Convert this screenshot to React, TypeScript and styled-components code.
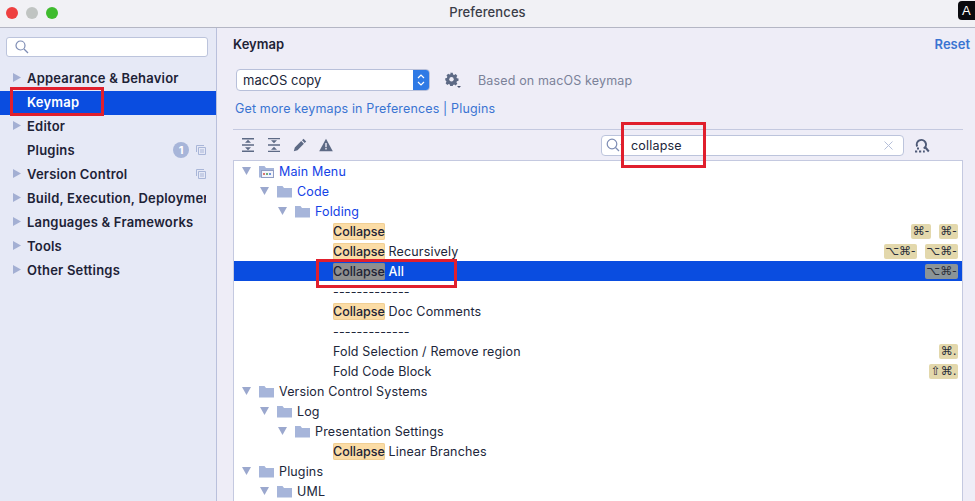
import * as React from 'react';
import styled, { createGlobalStyle } from 'styled-components';

const GlobalStyle = createGlobalStyle`
  html, body {
    margin: 0;
    padding: 0;
    height: 100%;
    overflow: hidden;
    background: #eeedf7;
    font-family: Inter, "Noto Sans", "Liberation Sans", sans-serif;
  }
`;

const Arrow: React.FC<{ open?: boolean }> = ({ open }) => (
  <svg width="10" height="10" viewBox="0 0 10 10">
    {open ? <path d="M0 1h9L4.500 9z" fill="#9ba8ce" /> : <path d="M1 0l8 4.500L1 9z" fill="#a3afd3" />}
  </svg>
);

const Folder: React.FC<{ menu?: boolean }> = ({ menu }) => (
  <svg width="15" height="13" viewBox="0 0 15 13">
    <path d="M0 1h5.500l1.500 2h8v9.500H0z" fill="#a6b5da" />
    {menu && (
      <>
        <rect x="2.500" y="5.500" width="12" height="7" fill="#f3f4fa" stroke="#8f9dc4" />
        <rect x="4" y="8" width="2" height="2" fill="#d9776f" />
        <rect x="7" y="8" width="2" height="2" fill="#6fae7b" />
        <rect x="10" y="8" width="2" height="2" fill="#6f94d9" />
      </>
    )}
  </svg>
);

const CopyIcon = () => (
  <svg width="10" height="10" viewBox="0 0 10 10" fill="none" stroke="#a9b6d8">
    <path d="M.5 7V.5H8M2.500 2.500h7v7h-7zM4 5h4M4 7h4" />
  </svg>
);

const navItems = [
  { label: 'Appearance & Behavior', arrow: true },
  { label: 'Keymap', selected: true },
  { label: 'Editor', arrow: true },
  { label: 'Plugins', badge: true, copy: true },
  { label: 'Version Control', arrow: true, copy: true },
  { label: 'Build, Execution, Deployment', arrow: true },
  { label: 'Languages & Frameworks', arrow: true },
  { label: 'Tools', arrow: true },
  { label: 'Other Settings', arrow: true },
];

type TreeRow = {
  depth: number;
  folder?: boolean;
  menu?: boolean;
  link?: boolean;
  hit?: boolean;
  text?: string;
  selected?: boolean;
  keys?: string[];
};

const rows: TreeRow[] = [
  { depth: 0, folder: true, menu: true, link: true, text: 'Main Menu' },
  { depth: 1, folder: true, link: true, text: 'Code' },
  { depth: 2, folder: true, link: true, text: 'Folding' },
  { depth: 3, hit: true, keys: ['⌘-', '⌘-'] },
  { depth: 3, hit: true, text: ' Recursively', keys: ['⌥⌘-', '⌥⌘-'] },
  { depth: 3, hit: true, text: ' All', selected: true, keys: ['⌥⌘-'] },
  { depth: 3, text: '-------------' },
  { depth: 3, hit: true, text: ' Doc Comments' },
  { depth: 3, text: '-------------' },
  { depth: 3, text: 'Fold Selection / Remove region', keys: ['⌘.'] },
  { depth: 3, text: 'Fold Code Block', keys: ['⇧⌘.'] },
  { depth: 0, folder: true, text: 'Version Control Systems' },
  { depth: 1, folder: true, text: 'Log' },
  { depth: 2, folder: true, text: 'Presentation Settings' },
  { depth: 3, hit: true, text: ' Linear Branches' },
  { depth: 0, folder: true, text: 'Plugins' },
  { depth: 1, folder: true, text: 'UML' },
];

const App: React.FC = () => {
  return (
    <S.Window>
      <GlobalStyle />
      <S.TitleBar>
        <S.Lights>
          <S.Light color="#ee4040" />
          <S.Light color="#c0c4c2" />
          <S.Light color="#3fbb2e" />
        </S.Lights>
        Preferences
        <S.ABadge>A</S.ABadge>
      </S.TitleBar>
      <S.Body>
        <S.Sidebar>
          <S.SideSearch>
            <svg width="14" height="14" viewBox="0 0 14 14" fill="none" stroke="#7d8cb4" strokeWidth="1.2">
              <circle cx="5.500" cy="5.500" r="4.500" />
              <path d="M9 9l4 4" />
            </svg>
          </S.SideSearch>
          <S.NavList>
            {navItems.map(item => (
              <S.NavRow key={item.label} selected={item.selected}>
                <S.NavArrow>{item.arrow && <Arrow />}</S.NavArrow>
                <S.NavLabel>{item.label}</S.NavLabel>
                {item.badge && <S.Badge>1</S.Badge>}
                {item.copy && (
                  <S.CopySlot>
                    <CopyIcon />
                  </S.CopySlot>
                )}
              </S.NavRow>
            ))}
          </S.NavList>
          <S.RedBox left={10} top={59} width={94} height={29} />
        </S.Sidebar>
        <S.Main>
          <S.HeadRow>
            <S.Title>Keymap</S.Title>
            <S.Reset>Reset</S.Reset>
          </S.HeadRow>
          <S.SchemeRow>
            <S.Select>
              <S.SelectText>macOS copy</S.SelectText>
              <S.SelectStepper>
                <svg width="8" height="14" viewBox="0 0 8 14" fill="none" stroke="#fff" strokeWidth="1.2">
                  <path d="M1 5l3-3 3 3M1 9l3 3 3-3" />
                </svg>
              </S.SelectStepper>
            </S.Select>
            <S.Gear>
              <svg width="17" height="17" viewBox="0 0 17 17">
                <path
                  d="M6 1h3l.4 1.800 1.300.6L12.300 2.400l2 2-1 1.600.6 1.300 1.800.4v2.600l-1.800.4-.6 1.300 1 1.600-2 2-1.600-1-1.300.6L9 16.400H6l-.4-1.800-1.300-.6-1.600 1-2-2 1-1.600-.6-1.300L.3 9.700V7.300l1.800-.4.6-1.300-1-1.600 2-2 1.600 1 1.300-.6z"
                  fill="#5d6a85"
                  transform="scale(.86)"
                />
                <circle cx="6.500" cy="7.300" r="2.200" fill="#eeedf7" />
                <path d="M12 14h4l-2 2z" fill="#4a5570" />
              </svg>
            </S.Gear>
            <S.BasedOn>Based on macOS keymap</S.BasedOn>
          </S.SchemeRow>
          <S.MoreLink>Get more keymaps in Preferences | Plugins</S.MoreLink>
          <S.Toolbar>
            <S.Tools>
              <svg width="14" height="14" viewBox="0 0 14 14" fill="#5d6a85">
                <path d="M1 0h12v1.500H1zM1 12.500h12V14H1zM1 6.300h12v1.400H1zM7 1.800l3 3H4zM7 12.200l-3-3h6z" />
              </svg>
              <svg width="14" height="14" viewBox="0 0 14 14" fill="#5d6a85">
                <path d="M1 6.300h12v1.400H1zM7 5.300l-3-3h6zM7 8.700l3 3H4zM1 0h12v1.200H1zM1 12.800h12V14H1z" />
              </svg>
              <svg width="14" height="14" viewBox="0 0 14 14" fill="#5d6a85">
                <path d="M10.500.8l2.700 2.700-1.500 1.500L9 2.300zM8.200 3.100l2.700 2.700-6.400 6.400L.8 13.200l1-3.700z" />
              </svg>
              <svg width="14" height="14" viewBox="0 0 14 14">
                <path d="M7 .8l6.800 12.400H.2z" fill="#5d6a85" />
                <rect x="6.300" y="5" width="1.400" height="4.200" fill="#eeedf7" />
                <rect x="6.300" y="10" width="1.400" height="1.500" fill="#eeedf7" />
              </svg>
            </S.Tools>
            <S.FilterBox>
              <svg width="19" height="14" viewBox="0 0 19 14" fill="none" stroke="#7d8cb4" strokeWidth="1.200">
                <circle cx="6" cy="6" r="4.800" />
                <path d="M9.500 9.500l3.500 3.500" />
                <path d="M14 6h4l-2 2.500z" fill="#7d8cb4" stroke="none" />
              </svg>
              <S.FilterText>collapse</S.FilterText>
              <svg width="9" height="9" viewBox="0 0 9 9" stroke="#b5bfd9" strokeWidth="1">
                <path d="M.5.500l8 8M8.500.500l-8 8" />
              </svg>
            </S.FilterBox>
            <S.ShortcutFind>
              <svg width="16" height="15" viewBox="0 0 16 15" fill="none" stroke="#4f5b78" strokeWidth="2">
                <path d="M3.200 8.500a4.600 4.600 0 1 1 6.500 2" />
                <path d="M11 9l3.800 4.500" />
                <path d="M1 13.500h2.200M5 13.500h2.200M9 13.500h1.800M3 10.500h2" />
              </svg>
            </S.ShortcutFind>
          </S.Toolbar>
          <S.TreeWrap>
            {rows.map((row, i) => (
              <S.Row key={i} selected={row.selected} depth={row.depth}>
                {row.folder && (
                  <S.RowArrow>
                    <Arrow open />
                  </S.RowArrow>
                )}
                {row.folder && <Folder menu={row.menu} />}
                <S.RowText link={row.link} selected={row.selected} leaf={!row.folder}>
                  {row.hit && <S.Hit selected={row.selected}>Collapse</S.Hit>}
                  {row.text}
                </S.RowText>
                {row.keys && (
                  <S.Keys>
                    {row.keys.map((k, j) => (
                      <S.KeyCap key={j} selected={row.selected}>
                        {k}
                      </S.KeyCap>
                    ))}
                  </S.Keys>
                )}
              </S.Row>
            ))}
          </S.TreeWrap>
          <S.RedBox left={404} top={94} width={85} height={46} />
          <S.RedBox left={99} top={231} width={141} height={29} />
        </S.Main>
      </S.Body>
    </S.Window>
  );
};

const S = {
  Window: styled.div`
    width: 975px;
    height: 501px;
    display: flex;
    flex-direction: column;
    overflow: hidden;
    color: #20263a;
  `,
  TitleBar: styled.div`
    position: relative;
    flex: 0 0 28px;
    box-sizing: border-box;
    height: 28px;
    padding-bottom: 3px;
    display: flex;
    align-items: center;
    justify-content: center;
    background: #f1f1f5;
    border-bottom: 1px solid #b4b6c4;
    font-size: 13px;
    font-weight: 500;
    letter-spacing: 0.1px;
    color: #3a3d48;
  `,
  Lights: styled.div`
    position: absolute;
    left: 6px;
    top: 7px;
    display: flex;
    gap: 8px;
  `,
  Light: styled.span<{ color: string }>`
    width: 12px;
    height: 12px;
    border-radius: 50%;
    background: ${p => p.color};
  `,
  ABadge: styled.div`
    position: absolute;
    right: 0;
    top: 1px;
    width: 17px;
    height: 19px;
    border-radius: 4px 0 0 4px;
    background: #0a0a0e;
    color: #fff;
    font-size: 13px;
    line-height: 19px;
    text-align: center;
    font-family: 'Liberation Sans', sans-serif;
  `,
  Body: styled.div`
    flex: 1;
    display: flex;
    min-height: 0;
  `,
  Sidebar: styled.aside`
    position: relative;
    flex: 0 0 217px;
    box-sizing: border-box;
    width: 217px;
    padding-top: 9px;
    background: #e6e9f6;
    border-right: 1px solid #b9c0dc;
  `,
  SideSearch: styled.div`
    box-sizing: border-box;
    height: 20px;
    margin: 0 8px 0 6px;
    padding-left: 8px;
    display: flex;
    align-items: center;
    background: #fff;
    border: 1px solid #bcc4dc;
    border-radius: 3px;
  `,
  NavList: styled.div`
    margin-top: 10px;
  `,
  NavRow: styled.div<{ selected?: boolean }>`
    box-sizing: border-box;
    height: 24px;
    padding-bottom: 2px;
    display: flex;
    align-items: center;
    padding-right: 10px;
    background: ${p => (p.selected ? '#0a4de0' : 'transparent')};
    color: ${p => (p.selected ? '#fff' : '#1d2236')};
  `,
  NavArrow: styled.span`
    flex: 0 0 12px;
    margin-left: 12px;
    margin-right: 3px;
    display: flex;
    align-items: center;
  `,
  NavLabel: styled.span`
    flex: 1;
    min-width: 0;
    overflow: hidden;
    white-space: nowrap;
    font-size: 13px;
    font-weight: 600;
    letter-spacing: 0.2px;
  `,
  Badge: styled.span`
    flex: 0 0 16px;
    height: 16px;
    margin-right: 7px;
    border-radius: 50%;
    background: #a7b5d9;
    color: #fff;
    font-size: 11px;
    font-weight: 700;
    line-height: 16px;
    text-align: center;
  `,
  CopySlot: styled.span`
    display: flex;
  `,
  Main: styled.main`
    position: relative;
    flex: 1;
    min-width: 0;
    box-sizing: border-box;
    padding: 0 12px 0 16px;
    background: #eeedf7;
  `,
  HeadRow: styled.div`
    height: 31px;
    display: flex;
    align-items: center;
    justify-content: space-between;
  `,
  Title: styled.div`
    font-size: 13px;
    font-weight: 600;
    color: #1d2236;
  `,
  Reset: styled.div`
    font-size: 13px;
    font-weight: 600;
    color: #3a74d2;
    margin-right: -7px;
  `,
  SchemeRow: styled.div`
    margin-top: 10px;
    display: flex;
    align-items: center;
    padding-left: 3px;
  `,
  Select: styled.div`
    box-sizing: border-box;
    width: 194px;
    height: 22px;
    display: flex;
    background: #fff;
    border: 1px solid #b8c0da;
    border-radius: 4px;
    overflow: hidden;
  `,
  SelectText: styled.span`
    flex: 1;
    padding-left: 6px;
    font-size: 13px;
    line-height: 20px;
    color: #20263a;
  `,
  SelectStepper: styled.span`
    flex: 0 0 16px;
    display: flex;
    align-items: center;
    justify-content: center;
    background: #2f7ae5;
  `,
  Gear: styled.span`
    margin-left: 15px;
    display: flex;
  `,
  BasedOn: styled.span`
    margin-left: 16px;
    font-size: 12.5px;
    letter-spacing: 0.15px;
    color: #7b8299;
  `,
  MoreLink: styled.div`
    margin-top: 8px;
    padding-left: 2px;
    height: 19px;
    font-size: 12.5px;
    line-height: 19px;
    letter-spacing: 0.15px;
    color: #3a74d2;
  `,
  Toolbar: styled.div`
    box-sizing: border-box;
    height: 31px;
    margin-top: 11px;
    display: flex;
    align-items: center;
    border-top: 1px solid #c4c9e0;
    padding: 0 0 0 8px;
  `,
  Tools: styled.div`
    flex: 1;
    display: flex;
    gap: 12px;
  `,
  FilterBox: styled.div`
    box-sizing: border-box;
    width: 303px;
    height: 21px;
    margin-right: 10px;
    padding: 0 10px 0 4px;
    display: flex;
    align-items: center;
    background: #fff;
    border: 1px solid #bcc4dc;
    border-radius: 4px;
  `,
  FilterText: styled.span`
    flex: 1;
    padding-left: 6px;
    font-size: 12.5px;
    letter-spacing: 0.2px;
    color: #20263a;
  `,
  ShortcutFind: styled.span`
    display: flex;
    margin-right: 33px;
  `,
  TreeWrap: styled.div`
    box-sizing: border-box;
    height: 342px;
    background: #fff;
    border: 1px solid #c4c9e0;
    border-bottom: none;
    overflow: hidden;
  `,
  Row: styled.div<{ selected?: boolean; depth: number }>`
    height: 20px;
    display: flex;
    align-items: center;
    padding-left: ${p => 8 + p.depth * 18}px;
    padding-right: 4px;
    background: ${p => (p.selected ? '#0a4de0' : 'transparent')};
  `,
  RowArrow: styled.span`
    display: flex;
    margin-right: 7px;
  `,
  RowText: styled.span<{ link?: boolean; selected?: boolean; leaf?: boolean }>`
    flex: 1;
    margin-left: ${p => (p.leaf ? '37px' : '5px')};
    white-space: pre;
    font-size: 12.5px;
    letter-spacing: 0.15px;
    color: ${p => (p.selected ? '#fff' : p.link ? '#1442e6' : '#20263a')};
    font-weight: ${p => (p.selected ? 500 : 400)};
  `,
  Hit: styled.span<{ selected?: boolean }>`
    padding: 1px 0;
    border-radius: 2px;
    background: ${p => (p.selected ? '#8f8f8f' : '#fbdca5')};
    box-shadow: inset 0 0 0 1px ${p => (p.selected ? '#8a8a8a' : '#f0cf95')};
    color: #1d2236;
    font-weight: 500;
    letter-spacing: 0;
  `,
  Keys: styled.div`
    display: flex;
    gap: 8px;
  `,
  KeyCap: styled.span<{ selected?: boolean }>`
    height: 15px;
    padding: 0 1.5px;
    border-radius: 2px;
    background: ${p => (p.selected ? '#8b9497' : '#e3d8ac')};
    font-family: 'DejaVu Sans', sans-serif;
    font-size: 12px;
    line-height: 15px;
    color: #2a2f3a;
  `,
  RedBox: styled.div<{ left: number; top: number; width: number; height: number }>`
    position: absolute;
    left: ${p => p.left}px;
    top: ${p => p.top}px;
    width: ${p => p.width}px;
    height: ${p => p.height}px;
    box-sizing: border-box;
    border: 3px solid #e01f2d;
    pointer-events: none;
  `,
};

export default App;
